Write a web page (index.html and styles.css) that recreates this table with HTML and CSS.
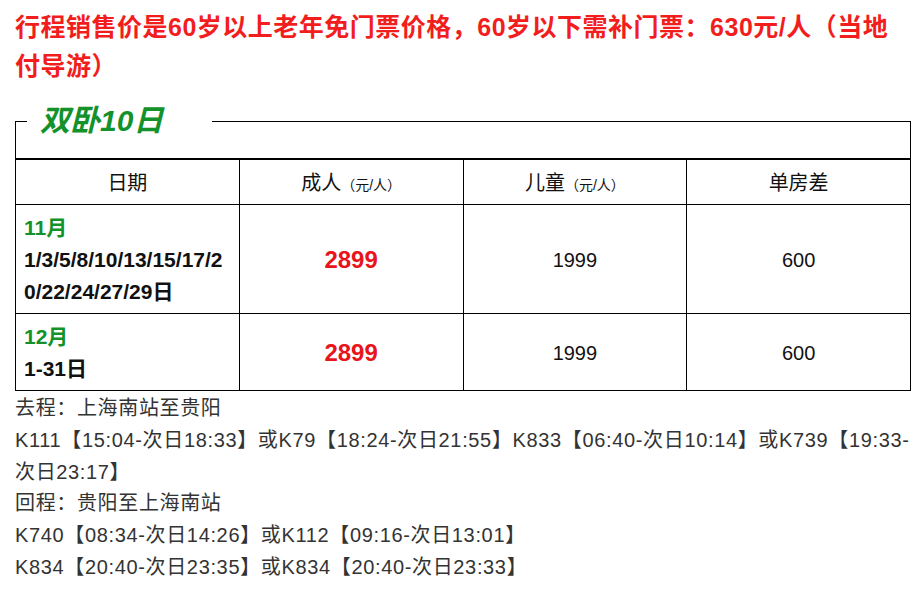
FILE: index.html
```html
<!DOCTYPE html>
<html lang="zh-CN">
<head>
<meta charset="utf-8">
<title>双卧10日</title>
<link rel="stylesheet" href="styles.css">
</head>
<body>
<div class="page">
  <p class="notice">行程销售价是60岁以上老年免门票价格，60岁以下需补门票：630元/人（当地付导游）</p>
  <fieldset class="plan"><legend class="plan-title">双卧10日</legend></fieldset>
  <table class="prices">
    <thead>
      <tr>
        <th>日期</th>
        <th>成人<span class="unit">（元/人）</span></th>
        <th>儿童<span class="unit">（元/人）</span></th>
        <th>单房差</th>
      </tr>
    </thead>
    <tbody>
      <tr>
        <td class="date"><span class="month">11月</span><br>1/3/5/8/10/13/15/17/20/22/24/27/29日</td>
        <td class="adult">2899</td>
        <td>1999</td>
        <td>600</td>
      </tr>
      <tr>
        <td class="date"><span class="month">12月</span><br>1-31日</td>
        <td class="adult">2899</td>
        <td>1999</td>
        <td>600</td>
      </tr>
    </tbody>
  </table>
  <div class="route">
    <p>去程：上海南站至贵阳</p>
    <p>K111【15:04-次日18:33】或K79【18:24-次日21:55】K833【06:40-次日10:14】或K739【19:33-次日23:17】</p>
    <p>回程：贵阳至上海南站</p>
    <p>K740【08:34-次日14:26】或K112【09:16-次日13:01】</p>
    <p>K834【20:40-次日23:35】或K834【20:40-次日23:33】</p>
  </div>
</div>
</body>
</html>
```

FILE: styles.css
```css
* {
  box-sizing: border-box;
}

html, body {
  margin: 0;
  padding: 0;
  background: #ffffff;
}

body {
  font-family: "Liberation Sans", "Noto Sans CJK SC", sans-serif;
  color: #222222;
}

.page {
  width: 924px;
  padding: 8px 13px 0 15px;
}

.notice {
  margin: 0 0 18px 0;
  font-size: 25px;
  line-height: 39px;
  font-weight: bold;
  letter-spacing: 0.5px;
  color: #f21d1d;
}

.plan {
  margin: 0;
  padding: 0 0 20px 11px;
  border: 1px solid #000000;
  min-width: 0;
}

.plan-title {
  padding: 0 49px 0 13px;
  font-size: 30px;
  line-height: 34px;
  font-weight: bold;
  font-style: italic;
  color: #13922b;
}

.prices {
  width: 100%;
  table-layout: fixed;
  border-collapse: collapse;
  border: 1px solid #000000;
  font-size: 20px;
  color: #111111;
}

.prices th,
.prices td {
  border: 1px solid #000000;
  padding: 7px 8px 5px;
  line-height: 32px;
  text-align: center;
  vertical-align: middle;
  font-weight: normal;
}

.unit {
  font-size: 14px;
  line-height: 1;
}

.prices td.date {
  text-align: left;
  font-size: 21px;
  font-weight: bold;
  word-break: break-all;
}

.month {
  color: #13922b;
}

.prices td.adult {
  color: #e8141b;
  font-size: 24px;
  font-weight: bold;
}

.route {
  margin-top: 2px;
  font-size: 20px;
  line-height: 31.8px;
  letter-spacing: 0.65px;
  color: #333333;
}

.route p {
  margin: 0;
}
```
